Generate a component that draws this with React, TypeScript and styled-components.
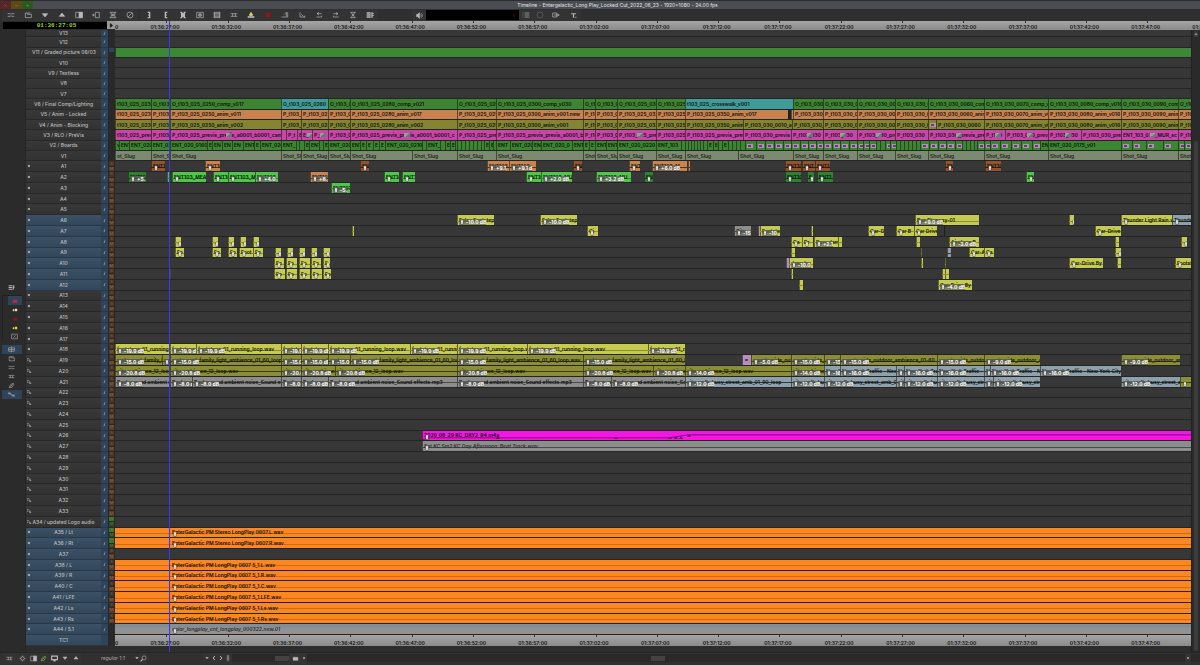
import React from "react";
import styled, { createGlobalStyle, css } from "styled-components";

const GlobalStyle = createGlobalStyle`
  * { box-sizing: border-box; }
  body {
    margin: 0;
    background: #2b2b2b;
    font-family: Inter, "Liberation Sans", sans-serif;
    font-size: 5px;
    line-height: 6px;
    color: #c4c4c4;
  }
  button, select, input {
    font: inherit;
    color: inherit;
    border: 0;
    margin: 0;
    padding: 0;
    background: none;
    border-radius: 0;
  }
`;

/* ---------- icons ---------- */

const icons: Record<string, React.ReactNode> = {
  lines: <path d="M1 4h4l1 1 1-1h4M1 8h4l1-1 1 1h4" />,
  clip: <path d="M2 3h3v2h6v5H2zM5 3h5" />,
  down: <path d="M2 4h8L6 9z" fill="currentColor" />,
  up: <path d="M2 8h8L6 3z" fill="currentColor" />,
  half: <><path d="M1 2h10v8H1z" /><path d="M6 2h5v8H6z" fill="currentColor" /></>,
  insert: <path d="M0 6h4M2 4v4M5 2h6v8H5z" />,
  over: <path d="M1 2h10M1 10h10M3 2v3h6V2M3 10V7h6v3M6 4v4" />,
  none: <><circle cx="6" cy="6" r="4.5" /><path d="M3 9l6-6" /></>,
  markIn: <path d="M4 2h3v8H4M7 6H5" strokeWidth="2" />,
  markOut: <path d="M8 2H5v8h3M5 6h2" strokeWidth="2" />,
  markClip: <path d="M2 2h2v8H2M10 2H8v8h2M4 6h4M5 4h2v4H5z" strokeWidth="2" />,
  splice: <path d="M1 2h4v8H1zM11 2H7v8h4zM3 5l2 1-2 1M9 5L7 6l2 1" />,
  bars: <path d="M1 2h10M1 4h10M1 6h10M1 8h10M1 10h10M2 2v8M10 2v8" />,
  equal: <path d="M1 4h10M1 8h10M4 4v4M8 4v4" />,
  lift: <><path d="M1 8h10v2H1z" fill="#d8d8d8" stroke="none" /><path d="M4 7V5l2-3 2 3v2z" fill="currentColor" /></>,
  extract: <path d="M4 3h5v6H4zM1 5h3M7 1v9" fill="currentColor" />,
  trimL: <path d="M1 9h7V2L5 5M10 2v8" />,
  trimR: <path d="M3 2v7h7M5 5l3 3M10 7v3" />,
  back: <path d="M3 4h7M3 4l3-2M3 4l3 2M2 9h8V7" />,
  fwd: <path d="M9 4H2M9 4L6 2M9 4L6 6M10 9H2V7" />,
  hour: <path d="M2 2h8M2 10h8M3 2l3 4-3 4M9 2L6 6l3 4M4 6h4" />,
  list: <path d="M1 3h6M1 6h6M1 9h6M9 2v8M11 3v1M11 6v1" strokeWidth="2" />,
  speaker: <><path d="M1 4h2l3-3v10L3 8H1z" fill="currentColor" /><path d="M8 4q2 2 0 4M9.500 2q3 4 0 8" /></>,
  menu: <path d="M4 3h7M4 6h7M4 9h7M1 3h1M1 6h1M1 9h1" />,
  circle: <circle cx="6" cy="6" r="4.5" />,
  tag: <path d="M1 3h6v6H1zM7 4l4 2-4 2M3 6h7" />,
  tee: <path d="M2 3h8M6 3v7M9 9h2" strokeWidth="2" />,
  smallSpk: <path d="M4 5h1l2-1v4L5 7H4z" fill="currentColor" />,
  waveSpk: <path d="M2 3h3l2 3v3h3M3 5v2h2M8 6l2 4" />,
  rec: <path d="M2 4h8v5H2z" fill="currentColor" />,
  pair: <><path d="M2 5h2v3H2zM6 4h4v4H6z" fill="currentColor" /></>,
  slash: <><path d="M1 2h10v8H1z" /><path d="M4 8l4-4M3 4h1M8 8h1" /></>,
  split: <path d="M1 3h10v6H1zM6 1v10M1 6h10" />,
  pen: <path d="M2 10l2-5 5-3 1 2-3 5zM4 8l4-4" />,
  curve: <path d="M1 4h4v3h5M1 3h2v2H1zM8 7h3v2H8z" />,
  gear: <><circle cx="6" cy="6" r="3" /><path d="M6 1v2M6 9v2M1 6h2M9 6h2M3 3l1 1M8 8l1 1M9 3L8 4M4 8L3 9" /></>,
  monitor: <path d="M1 2h10v6H1zM4 10h4M6 8v2" strokeWidth="2" />,
  search: <><circle cx="7" cy="5" r="3.500" /><path d="M4.500 7.500L1 11" strokeWidth="2" /></>,
  left: <path d="M8 2L4 6l4 4" strokeWidth="2" />,
  right: <path d="M4 2l4 4-4 4" strokeWidth="2" />,
  bar: <path d="M4 1h4v10H4z" fill="currentColor" />,
  dot: <path d="M4 4h4v4H4z" fill="currentColor" />,
  close: <path d="M3 3l6 6M9 3L3 9" />,
  minus: <path d="M3 6h6" />,
  plus: <path d="M3 6h6M6 3v6" />,
  play: <path d="M3 1v10l6-5z" fill="currentColor" />,
  gain: <path d="M6 1L2 5h2v6h4V5h2z" fill="currentColor" stroke="#333" strokeWidth="1" />,
  lock: <path d="M5 10l1-5M7 2v2" strokeWidth="2" />,
};

const Svg = styled.svg<{ $size: number }>`
  display: block;
  flex: none;
  width: ${(p) => p.$size}px;
  height: ${(p) => p.$size}px;
  fill: none;
  stroke: currentColor;
`;

const Icon = ({ name, size = 8 }: { name: string; size?: number }) => (
  <Svg $size={size} viewBox="0 0 12 12" aria-hidden="true">{icons[name]}</Svg>
);

/* ---------- window frame ---------- */

const Window = styled.div`
  display: flex;
  flex-direction: column;
  height: 100vh;
  min-height: 560px;
  overflow: hidden;
  background: #2d2d2d;
`;

const TitleBar = styled.header`
  display: flex;
  flex: none;
  height: 8px;
  margin-top: 1px;
  background: #4a4e53;
  align-items: center;
`;

const Title = styled.h1`
  flex: 1;
  margin: 0 0 0 2px;
  font-size: 5px;
  font-weight: 400;
  line-height: 8px;
  text-align: center;
  color: #e2e4e6;
`;

const Light = styled.button<{ $bg: string; $fg: string }>`
  display: grid;
  place-items: center;
  width: 11px;
  height: 8px;
  background: ${(p) => p.$bg};
  color: ${(p) => p.$fg};
`;

const Toolbar = styled.div`
  display: flex;
  flex: none;
  align-items: center;
  height: 12px;
  padding-left: 2px;
  background: #2f2f2f;
`;

const ToolGroup = styled.div<{ $gap?: number }>`
  display: flex;
  margin-left: ${(p) => p.$gap ?? 0}px;
`;

const Tool = styled.button<{ $color?: string; $w?: number }>`
  display: grid;
  place-items: center;
  width: ${(p) => p.$w ?? 17}px;
  height: 11px;
  color: ${(p) => p.$color ?? "#b8b8b8"};
  background: #333;
`;

const Meter = styled.div`
  display: flex;
  justify-content: flex-end;
  align-items: center;
  width: 93px;
  height: 10px;
  padding-right: 3px;
  background: #000;
  color: #5a1010;
`;

const Body = styled.main`
  position: relative;
  display: flex;
  flex: 1;
  flex-direction: column;
  min-height: 0;
`;

const RulerRow = styled.div`
  display: flex;
  flex: none;
  height: 9px;
  background: #2b2b2b;
`;

const Timecode = styled.div`
  width: 104px;
  height: 7px;
  margin: 1px 0 0 3px;
  padding-left: 3px;
  background: #000;
  color: #9ad41c;
  font: bold 6px/7px "Liberation Mono", monospace;
  text-align: center;
`;

const PlayBtn = styled.button`
  display: grid;
  place-items: center;
  width: 8px;
  height: 8px;
  background: #9b9b9b;
  color: #111;
`;

const Ruler = styled.div`
  display: flex;
  flex: 1;
  min-width: 0;
  overflow: hidden;
  background: linear-gradient(#a5a5a5, #8b8b8b);
  color: #111;
`;

const Stamp = styled.span<{ $edge?: "start" | "end" }>`
  flex-basis: 0;
  min-width: 0;
  overflow: hidden;
  display: flex;
  align-items: flex-end;
  justify-content: ${(p) => (p.$edge === "end" ? "flex-end" : p.$edge === "start" ? "flex-start" : "center")};
  font-weight: 600;
  line-height: 6px;
  white-space: nowrap;
  background: linear-gradient(#333, #333) calc(50% + 2px) 0 / 1px 2px no-repeat;
  ${(p) => p.$edge && css`background: none;`}

  > span { margin: 0 ${(p) => (p.$edge ? 16 : 0)}px; }
`;

const Columns = styled.div`
  display: flex;
  flex: 1;
  min-height: 0;
`;

const Side = styled.nav`
  display: flex;
  flex-direction: column;
  justify-content: center;
  align-items: center;
  width: 26px;
  padding-right: 2px;
  background: #2b2b2b;
  border-right: 1px solid #262626;
`;

const SideGroup = styled.div<{ $inset?: boolean }>`
  display: flex;
  flex-direction: column;
  align-items: flex-end;
  width: 20px;
  margin: ${(p) => (p.$inset ? "3px 0 4px" : "0")};
  ${(p) => p.$inset && css`border-left: 1px solid #222; border-top: 1px solid #222;`}
`;

const SideBtn = styled.button<{ $on?: boolean; $w: number; $color?: string }>`
  display: grid;
  place-items: center;
  width: ${(p) => p.$w}px;
  height: 9px;
  background: ${(p) => (p.$on ? "#2f4459" : "transparent")};
  color: ${(p) => p.$color ?? "#b4b4b4"};
`;

const Tracks = styled.div`
  flex: 1;
  min-width: 0;
  display: grid;
  grid-template-rows: minmax(0, 220fr) repeat(12, minmax(0, 310fr)) repeat(45, minmax(0, 323fr));
  margin-bottom: 6px;
`;

const Row = styled.section`
  display: grid;
  grid-template-columns: 75px 7px 7px 1fr;
  min-height: 0;
  overflow: hidden;
`;

const TrackName = styled.button<{ $on?: boolean }>`
  display: grid;
  grid-template-columns: 6px 1fr 6px;
  align-items: center;
  min-height: 0;
  overflow: hidden;
  font-weight: 500;
  background: ${(p) => (p.$on ? "linear-gradient(#3b5166, #34475a)" : "linear-gradient(#383838, #323232)")};
  border-bottom: 1px solid ${(p) => (p.$on ? "#293848" : "#282828")};
  color: #bdbdbd;
  white-space: nowrap;
`;

const LockBtn = styled.button`
  display: grid;
  place-items: center;
  overflow: hidden;
  background: #2f4459;
  border-bottom: 1px solid #26384a;
  color: #8fa8c0;
`;

const MuteSolo = styled.div`
  display: grid;
  grid-template-rows: 1fr 1fr;
  gap: 1px;
  padding: 0 1px 1px;
  overflow: hidden;
  background: #292929;
`;

const MsBtn = styled.button<{ $bg: string }>`
  min-height: 0;
  overflow: hidden;
  background: ${(p) => p.$bg};
  color: #8b6a48;
  font-size: 4px;
  line-height: 4px;
`;

const Lane = styled.div`
  display: flex;
  min-width: 0;
  min-height: 0;
  overflow: hidden;
  background: #373737;
  border-bottom: 1px solid #242424;
`;

const Gap = styled.span`
  flex-basis: 0;
  min-width: 0;
`;

type Look = { bg: string; line?: string; text?: string };

const looks: Record<string, Look> = {
  green: { bg: "#3c8633" },
  grade: { bg: "#3d8834" },
  teal: { bg: "#3f9c9a" },
  orange: { bg: "#c9814e" },
  olive: { bg: "#848432" },
  pink: { bg: "#c944ab" },
  slug: { bg: "#7d8a72", text: "#1c2417" },
  brown: { bg: "#91532f", line: "#3b2010" },
  amber: { bg: "#ca834f", line: "#5a3418" },
  lime: { bg: "#4fc64b", line: "#2f8a2c" },
  forest: { bg: "#2f8131", line: "#133f14" },
  yellow: { bg: "#c5ca50", line: "#8c9030" },
  moss: { bg: "#8c8e36", line: "#3a3b14" },
  steel: { bg: "#8da0ac", line: "#30393f" },
  gray: { bg: "#8d8d8d", line: "#4a4a4a" },
  magenta: { bg: "#f516e4" },
  music: { bg: "#fb8722", line: "#d26a10" },
  mix: { bg: "linear-gradient(#808e99 30%, #929292 40%)", text: "#333" },
  dark: { bg: "#20242c" },
  fade: { bg: "#b78ec0" },
};

const ClipBox = styled.div<{ $look: Look; $cut: boolean }>`
  position: relative;
  display: flex;
  align-items: center;
  flex-basis: 0;
  min-width: 0;
  overflow: hidden;
  background: ${(p) => p.$look.bg};
  color: ${(p) => p.$look.text ?? "#0c1008"};
  ${(p) => p.$cut && css`box-shadow: inset 1px 0 rgba(25, 30, 20, 0.6);`}
`;

const MidLine = styled.i<{ $color: string }>`
  position: absolute;
  left: 0;
  right: 0;
  top: 55%;
  height: 1px;
  background: ${(p) => p.$color};
`;

const ClipName = styled.span<{ $italic?: boolean }>`
  position: relative;
  flex: none;
  padding-left: 2px;
  font-weight: 600;
  white-space: nowrap;
  font-style: ${(p) => (p.$italic ? "italic" : "normal")};
  color: ${(p) => (p.$italic ? "#2e2e2e" : "inherit")};
`;

const Gain = styled.span<{ $bare: boolean }>`
  position: absolute;
  left: 2px;
  bottom: 0;
  display: flex;
  align-items: center;
  gap: 1px;
  color: #fff;
  font-weight: 700;
  line-height: 6px;
  white-space: nowrap;
  ${(p) => !p.$bare && css`background: rgba(100, 100, 92, 0.7);`}
`;

const FadeMark = styled.i`
  position: absolute;
  left: 2px;
  top: 3px;
  width: 6px;
  height: 4px;
  border: 1px solid #b28cba;
  border-right-width: 2px;
  background: #5d4464;
`;

const EffectMark = styled.i`
  position: absolute;
  left: 50%;
  top: 3px;
  width: 6px;
  height: 4px;
  background: linear-gradient(135deg, #86a592 50%, #5c7f6c 50%);
`;

const Envelope = styled.svg`
  position: absolute;
  inset: 0;
  width: 100%;
  height: 100%;
  fill: #26001f;
  stroke: none;
`;

const Playhead = styled.div`
  position: absolute;
  top: 0;
  bottom: 0;
  left: calc(115px + (100% - 124px) * 0.0505);
  width: 1px;
  background: #4038dc;
  pointer-events: none;
`;

const Scroll = styled.div`
  display: flex;
  flex-direction: column;
  width: 9px;
  padding: 1px 2px;
  background: #2a2a2a;
  border-left: 1px solid #222;
`;

const ScrollBtn = styled.button`
  display: grid;
  place-items: center;
  height: 6px;
  color: #999;
  background: #3a3a3a;
`;

const ScrollThumb = styled.div`
  flex: 1;
  margin-top: 104px;
  background: #3d3d3d;
  border-radius: 2px;
`;

const Footer = styled.footer`
  display: flex;
  flex: none;
  align-items: center;
  height: 13px;
  padding: 0 0 2px 3px;
  background: #303030;
  border-top: 1px solid #272727;
`;

const Zoom = styled.select`
  appearance: none;
  width: 34px;
  height: 9px;
  margin-left: 20px;
  font-style: italic;
  color: #a8a8a8;
`;

const FootScroll = styled.div`
  display: flex;
  flex: 1;
  align-items: center;
  height: 8px;
  padding-left: 43px;
  background: #292929;
`;

const Thumb = styled.span<{ $w: number }>`
  width: ${(p) => p.$w}px;
  height: 5px;
  background: #424242;
`;

const Spacer = styled.span<{ $grow: number }>`
  flex: ${(p) => p.$grow} 1 0;
`;

/* ---------- sequence data, in timeline units ---------- */

const START = 115;
const END = 1191;

interface Clip {
  from: number;
  to: number;
  look: string;
  name?: string;
  gain?: string;
  mark?: "fade" | "effect";
  italic?: boolean;
  envelope?: boolean;
}

type Cut = [number, string?, string?];

/* Builds butted clips from a list of cut points: [start, name, gain or look]. */
const run = (look: string, end: number, cuts: Cut[], extra: (name?: string, opt?: string) => Partial<Clip> = () => ({})): Clip[] =>
  cuts.map(([from, name, opt], i) => ({
    from,
    to: i + 1 < cuts.length ? cuts[i + 1][0] : end,
    look,
    name,
    ...extra(name, opt),
  }));

const asLook = (_: string | undefined, opt?: string): Partial<Clip> => (opt ? { look: opt } : {});
const asGain = (_: string | undefined, opt?: string): Partial<Clip> => ({ gain: opt ?? "" });
const asMark = (_: string | undefined, opt?: string): Partial<Clip> => (opt ? { mark: opt as "fade" | "effect" } : {});

/* Builds separate clips: [from, to, look, name, gain]. */
const spots = (list: [number, number, string?, string?, string?][]): Clip[] =>
  list.map(([from, to, look = "yellow", name, gain]) => ({ from, to, look, name, gain: to - from > 4 ? gain ?? "" : undefined }));

const shots = (p: string, stage: string): Cut[] => [
  [823, `${p}_t103_030_0030`], [857, `${p}_t103_030_0040`], [895, `${p}_t103_030_0050`],
  [928, `${p}_t103_030_0060_${stage}_v014`], [984, `${p}_t103_030_0070_${stage}_v012`],
  [1048, `${p}_t103_030_0080_${stage}_v016`], [1121, `${p}_t103_030_0090_${stage}_v011`], [1178, `${p}_t103_030`],
];

const comp = run("green", END, [
  [115, "t103_025_0230"], [151, "O_t103_025"], [170, "O_t103_025_0250_comp_v017"], [281, "O_t103_025_0260", "teal"],
  [328, "O_t103_025"], [350, "O_t103_025_0280_comp_v021"], [457, "O_t103_025_0290"], [496, "O_t103_025_0300_comp_v030"],
  [583, "O_t103"], [595, "O_t103_025"], [617, "O_t103_025_0320"], [656, "O_t103_025_0340"],
  [685, "t103_025_crosswalk_v001", "teal"], [793, "O_t103_030_0020"], ...shots("O", "comp"),
], asLook);

const animHead = (v1: string, v2: string, v3: string): Cut[] => [
  [115, "t103_025_0230"], [151, "P_t103_025"], [170, `P_t103_025_0250_anim_${v1}`], [281, "P_t103_025"],
  [301, "P_t103_025"], [328, "P_t103_025"], [350, `P_t103_025_0280_anim_${v2}`], [457, "P_t103_025_0290"],
  [496, `P_t103_025_0300_anim_${v3}`], [583, "P_t103"], [595, "P_t103_025"], [617, "P_t103_025_0320"], [656, "P_t103_025_0340"],
];

const locked = run("orange", END, [
  ...animHead("v011", "v017", "v001.new"), [685, "P_t103_025_0350_anim_v017"], [788, "", "dark"], [791, ""],
  [793, "P_t103_030_0020"], ...shots("P", "anim"),
], asLook);

const blocking = run("olive", END, [
  ...animHead("v002", "v002", "v001"), [685, "P_t103_025_0350_anim"], [743, "P_t103_030_0010_anim"],
  [792, "P_t103_030_0020"], ...shots("P", "anim").slice(0, 3), [928, "", "fade"], [936, "P_t103_030_0060"],
  ...shots("P", "anim").slice(4),
], asMark);

const previs = run("pink", END, [
  [115, "t103_025_previs"], [151, "P_t103_025"], [170, "P_t103_025_previs_previs_a0001_b0001_cam", "effect"],
  [281], [286, "P_t"], [297, "E"], [301, "E_t", "effect"], [312, "P_t", "effect"], [328, "P_t103_025"],
  [350, "P_t103_025_previs_previs_a0001_b0001_c", "effect"], [457, "P_t103_025_previs"], [496, "P_t103_025_previs_previs_a0001_b0001"],
  [583, "P_t103"], [595, "P_t103_025"], [617, "P_t103_025_previs", "effect"], [656, "P_t103_025"], [685, "P_t103_025_previs_previs"],
  [743, "P_t103_030_previs"], [791, "P_t103_030", "effect"], [823, "P_t103_030", "effect"], [857, "P_t103_030_previs", "effect"],
  [895, "P_t103_030"], [928, "P_t103_030_previs_previs", "effect"], [984, "P_t103", "effect"], [1005, "P_t103_030_previs", "effect"],
  [1048, "P_t103_030", "effect"], [1081, "P_t103_030_previs"], [1121, "ENT_103_030_MUR_sc", "effect"], [1178, "P_t103"],
], asMark);

const ticks = (from: number, to: number, step: number): Cut[] =>
  Array.from({ length: Math.ceil((to - from) / step) }, (_, i) => [from + i * step] as Cut);
const marked = (...at: number[]): Cut[] => at.map((x) => [x, "", "fade"] as Cut);

const boards = run("green", END, [
  [115, "v"], [119, "ENT"], [129, "ENT_020"], [151, "ENT_020"], [170, "ENT_020_0160"], [207, "E"], [212, "EN"], [222, "EN"],
  [232, "EN"], [243, "ENT"], [254, "E"], [260, "ENT_020"], [281, "ENT_"], [296], [299], [304, "E"], [309, "ENT"], [319], [323, "E"],
  [328, "ENT_020"], [350, "ENT"], [360, "E"], [366, "E"], [373, "E"], [379, "E"], [385, "ENT_020_0210"], [422], [426, "ENT_"], [440],
  [445, "E"], [450, "E"], [455], ...ticks(457, 482, 4), [484, "E"], [489, "E"], [493], [496, "ENT"], [510, "ENT_020"], [532, "ENT"],
  [541, "ENT_020_0"], [572, "ENT"], [583, "E"], [589, "E"], [595, "ENT"], [606, "ENT"], [617, "ENT_020_0220"], [656, "ENT_103"],
  [681], ...ticks(685, 706, 3), [707, "E"], [713, "E"], [718], [722, "E"], ...ticks(728, 744, 4),
  ...marked(745, 756, 765, 774, 783, 791, 800, 808, 816, 823, 832, 840, 849, 857, 863, 869), ...ticks(876, 884, 4),
  ...marked(885, 890), ...ticks(896, 918, 4), ...marked(920, 929, 938, 946, 955), ...ticks(962, 976, 4),
  ...marked(977, 984, 990, 1000, 1011, 1021, 1032), [1040, "ENT"], [1048, "ENT_020_0175_v01"],
  ...marked(1121, 1132, 1146, 1163, 1178, 1184),
], asMark);

const slugs = run("slug", END, [
  [115, "ot_Slug"],
  ...[151, 170, 281, 301, 328, 350, 412, 457, 496, 583, 595, 617, 656, 685, 738, 793, 823, 857, 895, 928, 984, 1048, 1121, 1178].map(
    (x) => [x, "Shot_Slug"] as Cut,
  ),
]);

const RUN = "footsteps_01_running_loop.wav";
const FAM = "restaurant_family_light_ambience_01_60_loop.wav";
const AMB = "city_ambience_12_loop.wav";
const NSE = "Background ambient noise_Sound effects.mp3";
const OUT = "countryside_outdoor_ambience_01-60";
const NYC = "New York Traffic - New York City";
const BSY = "city_walk_busy_street_amb_01_90_loop";
const each = (name: string, gain: string, ...at: number[]): Cut[] => at.map((x) => [x, name, gain] as Cut);
const CAR = "Car-Drive By";

const audio: Record<number, Clip[]> = {
  1: spots([[151, 165, "brown", "ENT103"], [205, 220, "amber", "ENT103"], [360, 369, "brown", "EN"], [487, 509, "amber", "ENT103", "+9.1"],
    [509, 536, "amber", "ENT103", "+9.1 d"], [573, 582, "brown", "EN"], [629, 640, "amber", "ENT"], [652, 687, "amber", "ENT103_M", "+6.0 dB"],
    [688, 690, "amber"], [785, 801, "brown", "ENT103"], [802, 815, "brown", "ENT"], [815, 830, "brown", "ENT1"], [945, 953, "brown", "EN"], [985, 1001, "brown", "ENT103"]]),
  2: spots([[128, 146, "forest", "ENT103", "+5."], [167, 169, "lime"], [172, 206, "lime", "ENT103_MEA"], [213, 228, "lime", "ENT10"],
    [228, 255, "lime", "ENT103_M"], [255, 278, "lime", "ENT103", "+4.0"], [310, 328, "amber", "ENT103", "+8."], [384, 399, "lime", "ENT10"],
    [402, 415, "lime", "ENT1"], [526, 541, "lime", "ENT10"], [541, 572, "lime", "ENT103_MU", "+2.0 dB"], [596, 631, "lime", "ENT103_MU", "+3.2 dB"],
    [644, 653, "forest", "EN"], [785, 801, "forest", "ENT10"], [807, 814, "forest", "E"], [817, 833, "forest", "ENT1"], [1026, 1034, "lime", "EN"]]),
  3: spots([[331, 350, "lime", "ENT103", "-5."]]),
  6: spots([[457, 494, "yellow", "Foley Footstep", "-10.0 dB"], [540, 577, "yellow", "Foley Footstep", "-10.0 dB"], [915, 979, "yellow", "Bus Flyaway-01", "+9.0 dB"],
    [1069, 1074], [1121, 1172, "yellow", "Thunder Light Rain.w"], [1172, 1191, "steel", "Thunder"]]),
  7: spots([[352, 354], [587, 598, "yellow", "Ci"], [734, 751, "gray", "City", "-15"], [758, 760, "fade"], [760, 780, "yellow", "Footste", "-10."], [811, 813],
    [868, 884, "yellow", "Car-D"], [896, 914, "yellow", "Car B"], [914, 937, "yellow", "Car Drive"], [944, 945, "dark"], [1095, 1121, "yellow", CAR]]),
  8: spots([[175, 181], [212, 218], [228, 234], [240, 246], [253, 259], [791, 802, "yellow", "Ca"], [802, 813, "yellow", "Dr"], [814, 838, "yellow", "Doorslam", "+2.1"],
    [838, 842], [916, 920], [949, 979, "yellow", "Airplane B", "-3.0 dB"], [1115, 1119], [1181, 1187]]),
  9: spots([[175, 184, "yellow", "Fo"], [212, 221, "yellow", "Fo"], [228, 237, "yellow", "Fo"], [239, 253, "yellow", "Foot"], [253, 263, "yellow", "Fo"],
    [275, 281], [287, 293], [299, 305], [311, 317], [323, 330], [791, 795], [921, 922], [947, 951, "steel"], [969, 984, "yellow", "Car-A"], [984, 994, "yellow", "Ca"], [1115, 1121]]),
  10: spots([[274, 284, "yellow", "Fo"], [286, 297, "yellow", "Fo"], [299, 310, "yellow", "Fo"], [311, 321, "yellow", "Fo"], [323, 330, "yellow", "F"], [786, 789, "fade"],
    [789, 813, "yellow", "Jeep by", "-10.0"], [921, 923], [945, 946], [1069, 1103, "yellow", CAR], [1117, 1121], [1175, 1191, "yellow", "Footst"]]),
  11: spots([[170, 171, "gray"], [274, 285, "yellow", "Fo"], [286, 297, "yellow", "Fo"], [299, 310, "yellow", "Fo"], [311, 322, "yellow", "Fo"], [323, 331, "yellow", "Fo"],
    [791, 793], [942, 945], [945, 949]]),
  12: spots([[799, 803], [938, 972, "yellow", CAR, "-4.0 dB"]]),
  18: run("yellow", 685, each(RUN, "-19.9 dB", 115, 170, 196, 281, 301, 328, 410, 457, 527, 648), asGain),
  19: [
    ...run("moss", 685, each(FAM, "-15.0 dB", 115, 162, 170, 281, 301, 328, 350, 457, 583), asGain),
    { from: 742, to: 751, look: "fade", mark: "fade" },
    ...run("moss", 791, each(OUT, "-5.0 dB", 751), asGain),
    ...run("moss", 984, each(OUT, "-15.0 dB", 791, 824, 840, 937), asGain),
    ...run("moss", 1040, each(OUT, "-9.0 dB", 984), asGain),
    ...run("moss", 1180, each(OUT, "-9.0 dB", 1121), asGain),
  ],
  20: [
    ...run("moss", 685, each(AMB, "-20.8 dB", 115, 170, 281, 301, 335, 457, 583, 653), asGain),
    ...run("moss", 824, each(AMB, "-14.0 dB", 685, 791), asGain),
    ...run("steel", 1121, each(NYC, "-16.0 dB", 824, 840, 896, 904, 937, 984, 990, 1040), asGain),
  ],
  21: [
    ...run("gray", 685, each(NSE, "-8.0 dB", 115, 170, 192, 281, 301, 328, 457, 583, 611), asGain),
    ...run("steel", 1040, each(BSY, "-12.0 dB", 685, 791, 824, 896, 904, 937, 984, 993), asGain),
    ...run("steel", 1180, each(BSY, "-12.0 dB", 1121), asGain),
    { from: 1180, to: 1191, look: "moss", gain: "" },
  ],
  26: [{ from: 422, to: END, look: "magenta", name: "2020_08_29 KC_DAY2_R4.m4a", gain: "", envelope: true }],
  27: [{ from: 422, to: END, look: "gray", name: "Ent KC Sm2 KC Day Afternoon: Beat Track.wav", gain: "", italic: true }],
  44: [{ from: START, to: 170, look: "mix" }, { from: 170, to: END, look: "mix", name: "color_longplay_ent_longplay_000322.new.01", gain: "", italic: true }],
};

const musicNames: Record<number, string> = {
  35: "Stereo LongPlay 0607.L", 36: "Stereo LongPlay 0607.R", 38: "LongPlay 0607 5_1.L", 39: "LongPlay 0607 5_1.R",
  40: "LongPlay 0607 5_1.C", 41: "LongPlay 0607 5_1.LFE", 42: "LongPlay 0607 5_1.Ls", 43: "LongPlay 0607 5_1.Rs",
};
Object.entries(musicNames).forEach(([n, name]) => {
  audio[Number(n)] = [
    { from: START, to: 170, look: "music" },
    { from: 170, to: END, look: "music", name: `EnterGalactic PM ${name}.wav`, gain: "" },
  ];
});

const suffix: Record<string, string> = {
  V11: "Graded picture 06/03", V9: "Textless", V6: "Final Comp/Lighting", V5: "Anim - Locked", V4: "Anim - Blocking",
  V3: "RLO / PreVis", V2: "Boards", A34: "updated Logo audio", A35: "Lt", A36: "Rt", A38: "L", A39: "R", A40: "C",
  A41: "LFE", A42: "Ls", A43: "Rs", A44: "5.1",
};
const title = (id: string) => (suffix[id] ? `${id} / ${suffix[id]}` : id);

const video: Record<number, Clip[]> = {
  11: [{ from: START, to: END, look: "grade" }],
  6: comp, 5: locked, 4: blocking, 3: previs, 2: boards, 1: slugs,
};

/* ---------- parts ---------- */

const ClipView = ({ clip }: { clip: Clip }) => {
  const look = looks[clip.look];
  return (
    <ClipBox $look={look} $cut={!["music", "mix"].includes(clip.look)} style={{ flexGrow: clip.to - clip.from }}>
      {look.line && <MidLine $color={look.line} />}
      {clip.envelope && (
        <Envelope viewBox="0 0 769 10" preserveAspectRatio="none" aria-hidden="true">
          <path d="M0 9L8 7H247L266 4H769" fill="none" stroke="#7a0a72" />
          <path d="M74 8l2-2 2 2zM192 8l2-2 2 2zM246 8l2-2 2 2zM252 8l2-2 2 2zM257 8l2-2 2 2zM265 6l2-2 2 2z" />
        </Envelope>
      )}
      {clip.name && <ClipName $italic={clip.italic}>{clip.name}</ClipName>}
      {clip.gain !== undefined && (
        <Gain $bare={clip.gain === ""}><Icon name="gain" size={6} />{clip.gain}</Gain>
      )}
      {clip.mark === "fade" && <FadeMark />}
      {clip.mark === "effect" && <EffectMark />}
    </ClipBox>
  );
};

const LaneView = ({ clips = [] }: { clips?: Clip[] }) => {
  const parts: React.ReactNode[] = [];
  let at = START;
  clips.forEach((clip, i) => {
    if (clip.from > at) parts.push(<Gap key={`g${i}`} style={{ flexGrow: clip.from - at }} />);
    parts.push(<ClipView key={i} clip={clip} />);
    at = clip.to;
  });
  if (at < END) parts.push(<Gap key="end" style={{ flexGrow: END - at }} />);
  return <Lane>{parts}</Lane>;
};

const Stamps = ({ tail }: { tail: number }) => (
  <Ruler>
    <Stamp $edge="end" style={{ flexGrow: 193 }}><span>01:36:22:00</span></Stamp>
    {Array.from({ length: 17 }, (_, i) => {
      const s = 27 + i * 5;
      const label = `01:${36 + Math.floor(s / 60)}:${String(s % 60).padStart(2, "0")}:00`;
      return <Stamp key={i} style={{ flexGrow: 613 }}><span>{label}</span></Stamp>;
    })}
    <Stamp $edge="start" style={{ flexGrow: tail }}><span>{tail > 200 ? "01:37:52:00" : ""}</span></Stamp>
  </Ruler>
);

const AudioRow = ({ n }: { n: number }) => {
  const id = `A${n}`;
  const on = (n >= 6 && n <= 12) || n >= 35;
  const green = n >= 34 && n <= 36;
  const dim = n >= 38;
  const wave = n >= 19 && n <= 34;
  return (
    <Row>
      <TrackName $on={on}><Icon name={wave ? "waveSpk" : "smallSpk"} size={6} /><span>{title(id)}</span></TrackName>
      <LockBtn aria-label={`Lock ${id}`}><Icon name="lock" size={5} /></LockBtn>
      <MuteSolo>
        {n < 44 && <MsBtn $bg={green ? "#2f7a22" : dim ? "#33302d" : "#463325"} aria-label={`Solo ${id}`}>S</MsBtn>}
        {n < 44 && <MsBtn $bg={green ? "#28431f" : "#5a3c26"} aria-label={`Mute ${id}`}>M</MsBtn>}
      </MuteSolo>
      <LaneView clips={audio[n]} />
    </Row>
  );
};

const tools: { gap: number; items: string[] }[] = [
  { gap: 0, items: ["lines", "clip", "down", "up"] },
  { gap: 0, items: ["half", "insert", "over", "none"] },
  { gap: 2, items: ["markIn", "markOut", "markClip", "splice"] },
  { gap: 0, items: ["bars", "equal", "lift", "extract"] },
  { gap: 0, items: ["trimL", "trimR", "back", "fwd"] },
  { gap: 0, items: ["hour", "list"] },
];
const toolColors: Record<string, string> = { lift: "#e0d36a", extract: "#8f1a1a" };

export default function App() {
  return (
    <>
      <GlobalStyle />
      <Window>
        <TitleBar>
          <Light $bg="#5a2526" $fg="#c05050" aria-label="Close"><Icon name="close" size={5} /></Light>
          <Light $bg="#5b4a14" $fg="#b09030" aria-label="Minimize"><Icon name="minus" size={5} /></Light>
          <Light $bg="#2b5a1c" $fg="#60b040" aria-label="Zoom"><Icon name="plus" size={5} /></Light>
          <Title>Timeline - Entergalactic_Long Play_Locked Cut_2022_06_23 - 1920x1080 - 24.00 fps</Title>
        </TitleBar>
        <Toolbar>
          {tools.map((g, i) => (
            <ToolGroup key={i} $gap={g.gap}>
              {g.items.map((t) => <Tool key={t} $color={toolColors[t]} aria-label={t}><Icon name={t} /></Tool>)}
            </ToolGroup>
          ))}
          <ToolGroup $gap={34}><Tool $w={14} aria-label="Audio"><Icon name="speaker" size={7} /></Tool></ToolGroup>
          <Meter><Icon name="menu" size={5} /></Meter>
          <Tool $w={14} aria-label="List"><Icon name="menu" /></Tool>
          <Tool $w={14} $color="#666" aria-label="Record"><Icon name="circle" /></Tool>
          <Tool $w={18} aria-label="Export"><Icon name="tag" /></Tool>
          <Tool $w={16} aria-label="Title"><Icon name="tee" size={7} /></Tool>
        </Toolbar>
        <Body>
          <RulerRow>
            <Timecode>01:36:27:05</Timecode>
            <PlayBtn aria-label="Play"><Icon name="play" size={5} /></PlayBtn>
            <Stamps tail={237} />
          </RulerRow>
          <Columns>
            <Side>
              <SideGroup><SideBtn $w={20} aria-label="Tracks"><Icon name="list" size={7} /></SideBtn></SideGroup>
              <SideGroup $inset>
                <SideBtn $w={14} $on $color="#c8243c" aria-label="Red"><Icon name="rec" size={6} /></SideBtn>
                <SideBtn $w={14} $color="#e8e4a0" aria-label="White"><Icon name="pair" size={6} /></SideBtn>
                <SideBtn $w={14} $color="#8a1414" aria-label="Dark red"><Icon name="rec" size={6} /></SideBtn>
                <SideBtn $w={14} $color="#d8d820" aria-label="Yellow"><Icon name="pair" size={6} /></SideBtn>
                <SideBtn $w={14} aria-label="Slash"><Icon name="slash" size={7} /></SideBtn>
              </SideGroup>
              <SideGroup>
                <SideBtn $w={20} $on aria-label="Split"><Icon name="split" size={7} /></SideBtn>
                <SideBtn $w={20} aria-label="Clip"><Icon name="clip" size={7} /></SideBtn>
                <SideBtn $w={20} aria-label="Lines"><Icon name="lines" size={7} /></SideBtn>
                <SideBtn $w={20} aria-label="Range"><Icon name="equal" size={7} /></SideBtn>
                <SideBtn $w={20} aria-label="Pen"><Icon name="pen" size={7} /></SideBtn>
                <SideBtn $w={20} $on aria-label="Keyframes"><Icon name="curve" size={7} /></SideBtn>
              </SideGroup>
            </Side>
            <Tracks>
              {Array.from({ length: 13 }, (_, i) => 13 - i).map((n) => (
                <Row key={n}>
                  <TrackName><span /><span>{title(`V${n}`)}</span></TrackName>
                  <LockBtn aria-label={`Lock V${n}`}><Icon name="lock" size={5} /></LockBtn>
                  <MuteSolo>{n === 11 && <MsBtn $bg="#2f4459" aria-label="Monitor V11" />}</MuteSolo>
                  <LaneView clips={video[n]} />
                </Row>
              ))}
              {Array.from({ length: 44 }, (_, i) => <AudioRow key={i} n={i + 1} />)}
              <Row>
                <TrackName $on><span /><span>TC1</span></TrackName>
                <LockBtn as="span" />
                <MuteSolo />
                <Stamps tail={147} />
              </Row>
            </Tracks>
            <Scroll>
              <ScrollBtn aria-label="Scroll up"><Icon name="up" size={4} /></ScrollBtn>
              <ScrollThumb />
            </Scroll>
          </Columns>
          <Playhead />
        </Body>
        <Footer>
          <Tool $w={13} aria-label="Menu"><Icon name="equal" size={7} /></Tool>
          <Tool $w={12} aria-label="Settings"><Icon name="gear" size={7} /></Tool>
          <Tool $w={10} aria-label="Panels"><Icon name="half" size={7} /></Tool>
          <Tool $w={11} $color="#7ec850" aria-label="Effects"><Icon name="pen" size={7} /></Tool>
          <Tool $w={10} aria-label="Monitor"><Icon name="monitor" size={7} /></Tool>
          <Tool $w={11} aria-label="Step in"><Icon name="down" size={6} /></Tool>
          <Tool $w={11} aria-label="Step out"><Icon name="up" size={6} /></Tool>
          <Zoom aria-label="Zoom preset"><option>regular 1:1</option></Zoom>
          <Icon name="down" size={4} />
          <Tool $w={8} aria-label="Find"><Icon name="search" size={7} /></Tool>
          <ToolGroup $gap={56}>
            <Tool $w={7} aria-label="Options"><Icon name="down" size={4} /></Tool>
            <Tool $w={7} aria-label="Previous"><Icon name="left" size={6} /></Tool>
            <Tool $w={7} aria-label="Next"><Icon name="right" size={6} /></Tool>
            <Tool $w={8} $color="#777" aria-label="Focus"><Icon name="bar" size={6} /></Tool>
          </ToolGroup>
          <FootScroll>
            <Thumb $w={14} />
            <Tool $w={12} aria-label="Stop"><Icon name="rec" size={7} /></Tool>
            <Tool $w={6} aria-label="Less"><Icon name="dot" size={4} /></Tool>
            <Spacer $grow={340} />
            <Thumb $w={14} />
            <Spacer $grow={515} />
            <Tool $w={6} aria-label="More"><Icon name="dot" size={4} /></Tool>
            <Spacer $grow={9} />
          </FootScroll>
        </Footer>
      </Window>
    </>
  );
}
